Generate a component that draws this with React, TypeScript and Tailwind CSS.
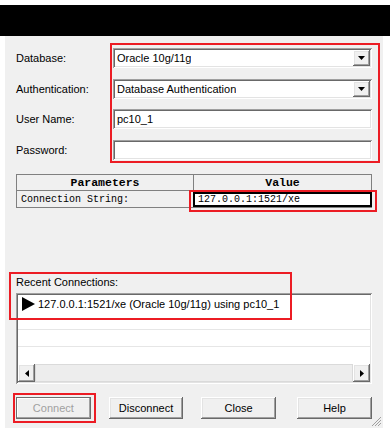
import React from 'react';

const raised =
  'bg-[#f0f0f0] shadow-[inset_-1px_-1px_#696969,inset_1px_1px_#ffffff,inset_-2px_-2px_#a0a0a0,inset_2px_2px_#e3e3e3]';
const sunken =
  'bg-white shadow-[inset_1px_1px_#a0a0a0,inset_-1px_-1px_#ffffff,inset_2px_2px_#696969,inset_-2px_-2px_#e3e3e3]';

const DownArrow = () => (
  <svg width="7" height="4" viewBox="0 0 7 4">
    <polygon points="0,0 7,0 3.5,4" fill="#000" />
  </svg>
);

const Select = ({ value }: { value: string }) => (
  <div className={`h-[20px] flex items-center pl-[4px] pr-[2px] ${sunken}`}>
    <span className="truncate">{value}</span>
    <div className={`ml-auto w-[17px] h-[16px] flex items-center justify-center ${raised}`}>
      <DownArrow />
    </div>
  </div>
);

const TextInput = ({ value }: { value: string }) => (
  <div className={`h-[20px] flex items-center pl-[4px] ${sunken}`}>{value}</div>
);

const Button = ({ label }: { label: string }) => (
  <button className={`w-[75px] h-[22px] flex items-center justify-center ${raised}`}>{label}</button>
);

export default function App() {
  const labels = ['Database:', 'Authentication:', 'User Name:', 'Password:'];
  // rows sit at 48, 79, 109, 140 in the original dialog
  const rowClass = ['', 'mt-[1px]', '', 'mt-[1px]'];

  return (
    <div className="w-[390px] h-[435px] bg-white text-black text-[11px] leading-[13px] font-['Liberation_Sans',Arial,sans-serif]">
      <div className="h-[5px]" />
      <div className="h-[31px] bg-black" />
      <div className="relative ml-[5px] w-[378px] h-[392px] bg-[#f0f0f0] px-[11px] pt-[12px]">
        {/* form */}
        <div className="flex">
          <div className="w-[97px] flex flex-col gap-[10px]">
            {labels.map((l, i) => (
              <div key={l} className={`h-[20px] flex items-center ${rowClass[i]}`}>
                {l}
              </div>
            ))}
          </div>
          <div className="w-[259px] flex flex-col gap-[10px]">
            <Select value="Oracle 10g/11g" />
            <div className="mt-[1px]">
              <Select value="Database Authentication" />
            </div>
            <TextInput value="pc10_1" />
            <div className="mt-[1px]">
              <TextInput value="" />
            </div>
          </div>
        </div>

        {/* parameters table */}
        <div className="mt-[14px] border border-[#808080] font-['Liberation_Mono','Courier_New',monospace]">
          <div className="flex h-[16px] border-b border-[#808080]">
            <div className="w-[177px] border-r border-[#808080] flex items-center justify-center font-bold text-[11.5px]">
              Parameters
            </div>
            <div className="flex-1 flex items-center justify-center font-bold text-[11.5px]">Value</div>
          </div>
          <div className="flex h-[16px]">
            <div className="w-[177px] border-r border-[#808080] flex items-center pl-[4px] text-[10px]">
              Connection String:
            </div>
            <div className="flex-1 -ml-px -mr-px mt-[1px] h-[15px] border-2 border-black bg-white flex items-center pl-[3px] text-[10px]">
              127.0.0.1:1521/xe
            </div>
          </div>
        </div>

        {/* recent connections */}
        <div className="mt-[68px]">Recent Connections:</div>
        <div className={`mt-[4px] h-[91px] p-[2px] flex flex-col ${sunken}`}>
          <div className="h-[35px] border-b border-[#e6e6e6]">
            <div className="h-[18px] flex items-center pl-[4px] gap-[3px]">
              <svg width="13" height="14" viewBox="0 0 13 14">
                <polygon points="0,0 13,7 0,14" fill="#000" />
              </svg>
              <span>127.0.0.1:1521/xe (Oracle 10g/11g) using pc10_1</span>
            </div>
          </div>
          <div className="h-[17px] border-b border-[#e6e6e6]" />
          <div className="h-[17px]" />
          <div className="h-[18px] flex bg-[#f0f0f0]">
            <div className={`w-[17px] h-[18px] flex items-center justify-center ${raised}`}>
              <svg width="4" height="7" viewBox="0 0 4 7">
                <polygon points="4,0 4,7 0,3.5" fill="#000" />
              </svg>
            </div>
            <div className="flex-1 border border-[#dadada] bg-[#ededed]" />
            <div className={`w-[17px] h-[18px] flex items-center justify-center ${raised}`}>
              <svg width="4" height="7" viewBox="0 0 4 7">
                <polygon points="0,0 4,3.5 0,7" fill="#000" />
              </svg>
            </div>
          </div>
        </div>

        {/* buttons */}
        <div className="mt-[13px] flex gap-[18px]">
          <button className="w-[75px] h-[22px] flex items-center justify-center bg-[#f0f0f0] border border-[#6d6d6d] shadow-[inset_-1px_-1px_#a0a0a0,inset_1px_1px_#ffffff] text-[#a0a0a0]">
            Connect
          </button>
          <Button label="Disconnect" />
          <Button label="Close" />
          <div className="ml-[3px]">
            <Button label="Help" />
          </div>
        </div>

        {/* size grip */}
        <svg className="absolute right-[1px] bottom-[1px]" width="11" height="11" viewBox="0 0 11 11">
          <path d="M10 1 L1 10 M10 4 L4 10 M10 7 L7 10" stroke="#a0a0a0" strokeWidth="1" />
        </svg>

        {/* red annotation boxes */}
        <div className="absolute left-[105px] top-[7px] w-[270px] h-[120px] border-2 border-[#ec1c24]" />
        <div className="absolute left-[184px] top-[154px] w-[188px] h-[22px] border-2 border-[#ec1c24]" />
        <div className="absolute left-[4px] top-[236px] w-[283px] h-[48px] border-2 border-[#ec1c24]" />
        <div className="absolute left-[8px] top-[357px] w-[83px] h-[30px] border-2 border-[#ec1c24]" />
      </div>
    </div>
  );
}
